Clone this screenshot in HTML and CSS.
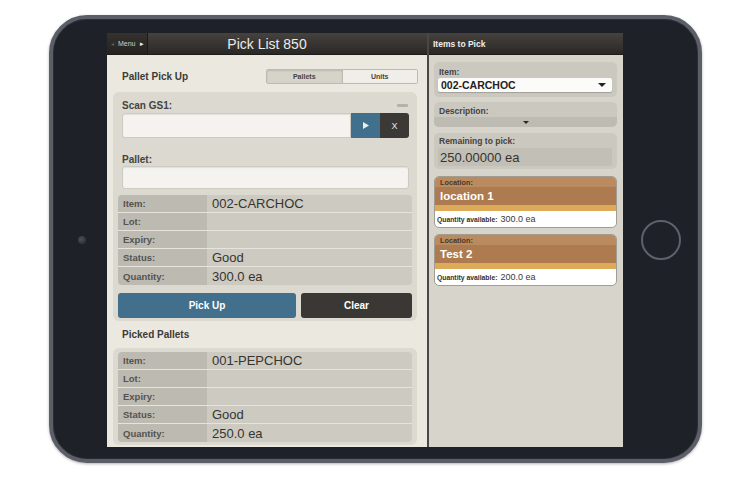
FILE: index.html
```html
<!DOCTYPE html>
<html>
<head>
<meta charset="utf-8">
<link rel="stylesheet" href="styles.css">
</head>
<body>
<div class="device">
  <div class="bezel-left"><div class="camera"></div></div>
  <div class="screen">
    <div class="pane-left">
      <div class="topbar">
        <div class="menu-btn"><span class="arr-l">&#9666;</span><span>Menu</span><span class="arr-r">&#9656;</span></div>
        <div class="title">Pick List 850</div>
        <div class="spacer"></div>
      </div>
      <div class="left-body">
        <div class="section-head">
          <div class="section-title">Pallet Pick Up</div>
          <div class="seg">
            <div class="seg-item active">Pallets</div>
            <div class="seg-item">Units</div>
          </div>
        </div>
        <div class="card">
          <div class="field">
            <div class="label-row"><span>Scan GS1:</span><span class="indicator"></span></div>
            <div class="input-row">
              <div class="input"></div>
              <div class="btn-play"><svg width="6" height="7" viewBox="0 0 6 7"><path d="M0 0 L6 3.5 L0 7 Z" fill="#e9eef2"/></svg></div>
              <div class="btn-x">X</div>
            </div>
          </div>
          <div class="field field-pallet">
            <div class="label-row"><span>Pallet:</span></div>
            <div class="input input-full"></div>
          </div>
          <div class="table">
            <div class="row"><div class="lbl">Item:</div><div class="val">002-CARCHOC</div></div>
            <div class="row"><div class="lbl">Lot:</div><div class="val"></div></div>
            <div class="row"><div class="lbl">Expiry:</div><div class="val"></div></div>
            <div class="row"><div class="lbl">Status:</div><div class="val">Good</div></div>
            <div class="row"><div class="lbl">Quantity:</div><div class="val">300.0 ea</div></div>
          </div>
          <div class="actions">
            <div class="btn btn-pick">Pick Up</div>
            <div class="btn btn-clear">Clear</div>
          </div>
        </div>
        <div class="subhead">Picked Pallets</div>
        <div class="card card-picked">
          <div class="table table-picked">
            <div class="row"><div class="lbl">Item:</div><div class="val">001-PEPCHOC</div></div>
            <div class="row"><div class="lbl">Lot:</div><div class="val"></div></div>
            <div class="row"><div class="lbl">Expiry:</div><div class="val"></div></div>
            <div class="row"><div class="lbl">Status:</div><div class="val">Good</div></div>
            <div class="row"><div class="lbl">Quantity:</div><div class="val">250.0 ea</div></div>
          </div>
        </div>
      </div>
    </div>
    <div class="pane-right">
      <div class="topbar topbar-right">Items to Pick</div>
      <div class="right-body">
        <div class="rcard rcard-item">
          <div class="rlabel">Item:</div>
          <div class="select"><span>002-CARCHOC</span><span class="tri"></span></div>
        </div>
        <div class="rcard rcard-desc">
          <div class="rlabel">Description:</div>
          <div class="desc-bar"><span class="tri tri-small"></span></div>
        </div>
        <div class="rcard rcard-rem">
          <div class="rlabel">Remaining to pick:</div>
          <div class="rem-box">250.00000 ea</div>
        </div>
        <div class="loc">
          <div class="loc-head">Location:</div>
          <div class="loc-name">location 1</div>
          <div class="loc-stripe"></div>
          <div class="loc-qty"><b>Quantity available:</b> 300.0 ea</div>
        </div>
        <div class="loc loc-second">
          <div class="loc-head">Location:</div>
          <div class="loc-name">Test 2</div>
          <div class="loc-stripe"></div>
          <div class="loc-qty"><b>Quantity available:</b> 200.0 ea</div>
        </div>
      </div>
    </div>
  </div>
  <div class="bezel-right"><div class="home"></div></div>
</div>
</body>
</html>
```

FILE: styles.css
```css
* { box-sizing: border-box; margin: 0; padding: 0; }
html, body { background: #ffffff; }
body {
  font-family: "Liberation Sans", Arial, sans-serif;
  width: 750px;
  height: 480px;
  overflow: hidden;
}

.device {
  margin: 15px 0 0 49px;
  width: 653px;
  height: 448px;
  border: 4px solid #5b6068;
  border-radius: 38px;
  background: #1e2128;
  display: flex;
  align-items: center;
  padding: 14px 0 12px;
  box-shadow: 0 1px 3px rgba(0,0,0,0.3), inset 0 0 0 1px #2a2d33;
}
.bezel-left { width: 54px; display: flex; justify-content: center; padding-left: 4px; }
.camera {
  width: 8px; height: 8px; border-radius: 50%;
  background: radial-gradient(circle at 40% 40%, #4d5058, #25272d);
}
.bezel-right { flex: 1; display: flex; justify-content: center; }
.home { width: 40px; height: 40px; border-radius: 50%; border: 2px solid #5c626c; }

.screen {
  width: 516px;
  height: 414px;
  display: flex;
  overflow: hidden;
  background: #ebe8df;
}

/* ---------- top bars ---------- */
.topbar {
  height: 22px;
  flex: 0 0 22px;
  display: flex;
  align-items: center;
  background: linear-gradient(#46423e, #2a2825);
  border-bottom: 1px solid #1c1b19;
}
.menu-btn {
  width: 41px;
  height: 100%;
  display: flex;
  align-items: center;
  gap: 4px;
  padding-left: 4px;
  background: linear-gradient(#34312e, #252321);
  border-right: 1px solid #1b1a18;
  font-size: 7px;
  color: #cfccc6;
}
.arr-l { color: #5f5c58; font-size: 6px; }
.arr-r { color: #f2f2f2; font-size: 7px; }
.title { flex: 1; text-align: center; font-size: 14px; color: #ebebeb; }
.spacer { width: 41px; }

/* ---------- left pane ---------- */
.pane-left { width: 320px; display: flex; flex-direction: column; background: #ebe8df; }
.left-body { flex: 1; padding: 0 10px 0 6px; overflow: hidden; }
.section-head {
  display: flex;
  align-items: center;
  justify-content: space-between;
  padding: 14px 0 8px;
}
.section-title { padding-left: 9px; font-size: 10px; font-weight: bold; color: #3b3a37; }
.seg {
  width: 152px;
  height: 15px;
  display: flex;
  margin-right: -1px;
  border: 1px solid #bdbab1;
  border-radius: 2px;
  overflow: hidden;
}
.seg-item {
  flex: 1;
  display: flex; align-items: center; justify-content: center;
  font-size: 7px; font-weight: bold; color: #45433f;
  background: #f0eee8;
}
.seg-item.active { background: #d6d3c9; box-shadow: inset 0 1px 2px rgba(0,0,0,0.12); border-right: 1px solid #bdbab1; }

.card { background: #dcd9d0; border-radius: 6px; padding: 7px 5px 3px; }
.field { padding: 0 3px 0 4px; }
.label-row {
  height: 12px;
  display: flex; align-items: center; justify-content: space-between;
  font-size: 10px; font-weight: bold; color: #45433f;
  margin-bottom: 2px;
}
.indicator { width: 11px; height: 3px; background: #b4b2ab; margin-right: 1px; border-radius: 1px; }
.input-row { display: flex; height: 25px; }
.input {
  flex: 1;
  background: #f4f3ef;
  border: 1px solid #cdcac2;
  border-radius: 3px 0 0 3px;
  box-shadow: inset 0 1px 1px rgba(0,0,0,0.08);
}
.btn-play { width: 29px; background: #41708d; display: flex; align-items: center; justify-content: center; }
.btn-x {
  width: 29px; background: #3a3936; border-radius: 0 3px 3px 0;
  display: flex; align-items: center; justify-content: center;
  font-size: 9px; color: #e6e6e6;
}
.field-pallet { margin-top: 15px; }
.field-pallet .label-row { margin-bottom: 1px; }
.input-full { height: 23px; border-radius: 3px; }

.table { margin-top: 6px; border-radius: 4px; overflow: hidden; }
.row { height: 18px; display: flex; border-bottom: 1px solid rgba(238,236,230,0.55); }
.row:last-child { border-bottom: none; }
.lbl {
  width: 89px;
  background: #bdbab1;
  display: flex; align-items: center; padding-left: 5px;
  font-size: 9.5px; font-weight: bold; color: #55534f;
}
.val {
  flex: 1;
  background: #cdcac1;
  display: flex; align-items: center; padding-left: 5px;
  font-size: 13px; color: #35342f;
}
.actions { display: flex; gap: 5px; margin-top: 8px; height: 25px; }
.btn {
  display: flex; align-items: center; justify-content: center;
  border-radius: 3px;
  font-size: 10px; font-weight: bold; color: #ffffff;
}
.btn-pick { flex: 0 0 178px; background: #426f8b; }
.btn-clear { flex: 1; background: #393835; }
.subhead { padding: 8px 0 7px 9px; line-height: 12px; font-size: 10px; font-weight: bold; color: #3b3a37; }
.card-picked { padding: 4px 5px 3px; }
.table-picked { margin-top: 0; }

/* ---------- right pane ---------- */
.pane-right {
  flex: 1;
  display: flex; flex-direction: column;
  background: #d7d4cb;
  border-left: 2px solid #4a4845;
}
.topbar-right { padding-left: 4px; font-size: 8.5px; font-weight: bold; color: #eeeeee; }
.right-body { padding: 7px 6px 0 5px; }
.rcard { background: #cbc8bf; border-radius: 5px; }
.rlabel { height: 12px; display: flex; align-items: center; padding-left: 1px; font-size: 8.5px; font-weight: bold; color: #45433f; }
.rcard-item { padding: 4px 5px 5px 4px; }
.select {
  height: 14px;
  margin-top: 0;
  background: #fbfbf9;
  border-radius: 2px;
  box-shadow: 0 1px 1px rgba(0,0,0,0.2);
  display: flex; align-items: center; justify-content: space-between;
  padding: 0 6px 0 3px;
  font-size: 10.5px; font-weight: bold; color: #222222;
}
.tri { width: 0; height: 0; border-left: 4px solid transparent; border-right: 4px solid transparent; border-top: 4px solid #222222; }
.tri-small { border-left-width: 3px; border-right-width: 3px; border-top-width: 3px; border-top-color: #2a2a2a; }
.rcard-desc { margin-top: 5px; }
.rcard-desc .rlabel { height: 15px; padding: 3px 0 0 5px; }
.desc-bar { height: 10px; background: #bebbb2; border-radius: 0 0 5px 5px; display: flex; align-items: center; justify-content: center; }
.rcard-rem { margin-top: 6px; padding: 2px 5px 3px 4px; }
.rem-box {
  margin-top: 1px; height: 18px;
  background: #c2bfb6; border-radius: 2px;
  display: flex; align-items: center; padding-left: 2px;
  font-size: 13px; color: #35342f;
}
.loc {
  margin-top: 7px;
  border: 1px solid #a29d93;
  border-radius: 5px;
  overflow: hidden;
  background: #ffffff;
}
.loc-second { margin-top: 6px; }
.loc-head { height: 10px; background: #b98b5e; display: flex; align-items: center; padding-left: 5px; font-size: 7.3px; font-weight: bold; color: #4a3727; }
.loc-name { height: 18px; background: #ad7b4f; display: flex; align-items: center; padding-left: 5px; font-size: 11.5px; font-weight: bold; color: #ffffff; }
.loc-stripe { height: 6px; background: #dcaa58; }
.loc-qty { height: 16px; display: flex; align-items: center; gap: 3px; padding-left: 2px; font-size: 9px; color: #3a3935; }
.loc-qty b { font-size: 6.8px; color: #333230; }
```
